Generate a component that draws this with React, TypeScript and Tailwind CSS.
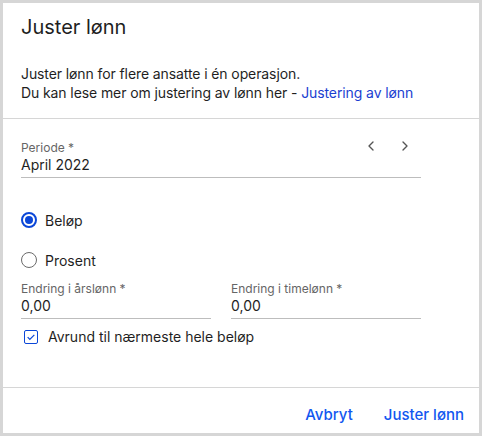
import { ChevronLeft, ChevronRight } from "lucide-react"

const font = { fontFamily: "Inter, 'Noto Sans', sans-serif" }

function Field({ label, value, className }: { label: string; value: string; className?: string }) {
  return (
    <div className={"border-b border-[#bdbdbd] pb-[2px] " + (className ?? "")}>
      <div className="text-[12px] leading-[16px] text-[#666]">{label}</div>
      <div className="-mt-px text-[14px] leading-[20px] text-[#1f1f1f]">{value}</div>
    </div>
  )
}

function Radio({ checked, label }: { checked?: boolean; label: string }) {
  return (
    <label className="flex items-center h-[20px]">
      <span
        className={
          "w-[16px] h-[16px] rounded-full flex items-center justify-center " +
          (checked ? "border-2 border-[#0b47d8]" : "border-[1.5px] border-[#6b6b6b]")
        }
      >
        {checked && <span className="w-[8px] h-[8px] rounded-full bg-[#0b47d8]" />}
      </span>
      <span className="ml-[8px] text-[14px] text-[#1f1f1f]">{label}</span>
    </label>
  )
}

export default function App() {
  return (
    <div style={font} className="w-[482px] h-[436px] bg-white border-[3px] border-[#d6d6d6] flex flex-col">
      {/* Header */}
      <div className="px-[18px] pt-[10px] pb-[16px] border-b border-[#d6d6d6]">
        <h2 className="text-[20px] leading-[28px] text-[#1f1f1f]">Juster lønn</h2>
        <p className="mt-[23px] text-[14px] leading-[19px] tracking-[-0.1px] text-[#1f1f1f]">
          Juster lønn for flere ansatte i én operasjon.
          <br />
          Du kan lese mer om justering av lønn her -{" "}
          <a href="#" className="text-[#1b3fd1]">
            Justering av lønn
          </a>
        </p>
      </div>

      {/* Body */}
      <div className="flex-1 px-[18px] pt-[21px]">
        <div className="relative w-[400px]">
          <Field label="Periode *" value="April 2022" />
          <div className="absolute right-[8px] top-[-2px] flex gap-[18px] text-[#555]">
            <ChevronLeft size={16} strokeWidth={2} />
            <ChevronRight size={16} strokeWidth={2} />
          </div>
        </div>

        <div className="mt-[32px] flex flex-col gap-[20px]">
          <Radio checked label="Beløp" />
          <Radio label="Prosent" />
        </div>

        <div className="mt-[11px] flex gap-[20px] w-[400px]">
          <Field label="Endring i årslønn *" value="0,00" className="flex-1" />
          <Field label="Endring i timelønn *" value="0,00" className="flex-1" />
        </div>

        <label className="mt-[8px] ml-[3px] flex items-center">
          <span className="w-[14px] h-[14px] rounded-[2px] border-[1.5px] border-[#0b47d8] flex items-center justify-center">
            <svg viewBox="0 0 12 12" className="w-[10px] h-[10px]" fill="none" stroke="#0b47d8" strokeWidth="1.5">
              <path d="M2 6.2l2.6 2.6L10 3.4" />
            </svg>
          </span>
          <span className="ml-[10px] text-[14px] leading-[20px] text-[#1f1f1f]">Avrund til nærmeste hele beløp</span>
        </label>
      </div>

      {/* Footer */}
      <div className="h-[46px] border-t border-[#d6d6d6] flex items-center justify-end gap-[31px] pr-[15px] pt-[9px]">
        <button className="text-[15px] font-medium text-[#1257f0]">Avbryt</button>
        <button className="text-[15px] font-medium text-[#1257f0]">Juster lønn</button>
      </div>
    </div>
  )
}
